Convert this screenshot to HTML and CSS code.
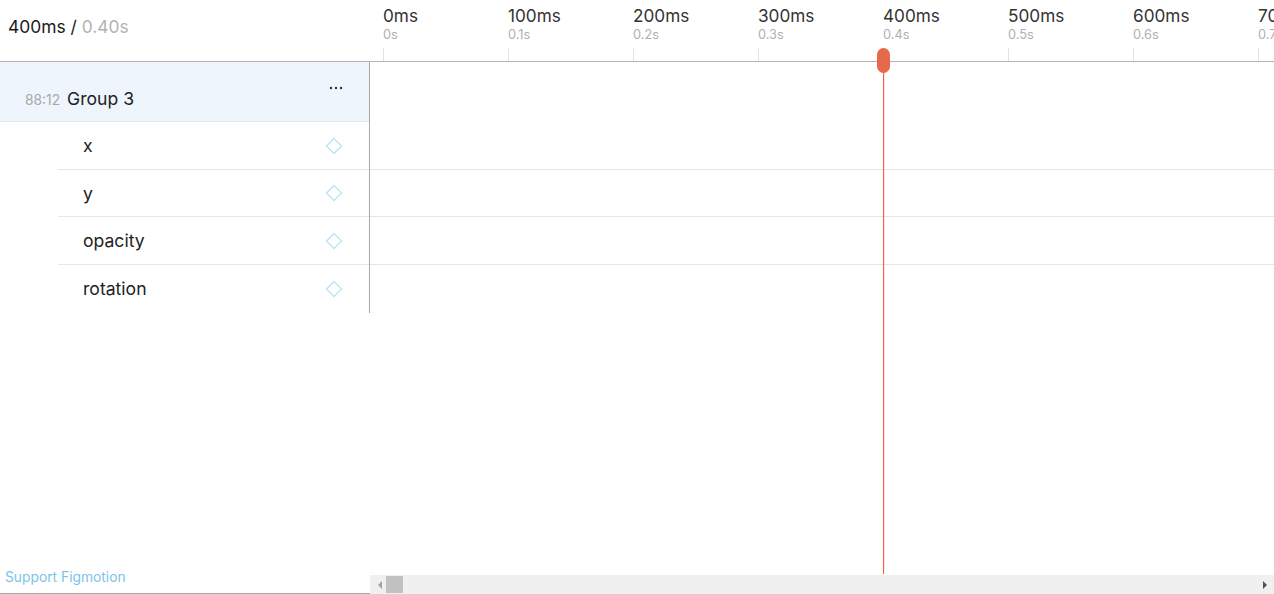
FILE: index.html
```html
<!DOCTYPE html>
<html lang="en">

<head>
    <meta charset="UTF-8">
    <meta name="viewport" content="width=device-width, initial-scale=1.0">
    <title>Figmotion Timeline</title>
    <link rel="stylesheet" href="styles.css">
</head>

<body>
    <div class="app">
        <div class="top">
            <div class="time-readout">400ms <span class="slash">/</span> <span class="secs">0.40s</span></div>
            <div class="ruler">
                <div class="tick"><span class="ms">0ms</span><span class="s">0s</span><i class="mark"></i></div>
                <div class="tick"><span class="ms">100ms</span><span class="s">0.1s</span><i class="mark"></i></div>
                <div class="tick"><span class="ms">200ms</span><span class="s">0.2s</span><i class="mark"></i></div>
                <div class="tick"><span class="ms">300ms</span><span class="s">0.3s</span><i class="mark"></i></div>
                <div class="tick"><span class="ms">400ms</span><span class="s">0.4s</span><i class="mark"></i></div>
                <div class="tick"><span class="ms">500ms</span><span class="s">0.5s</span><i class="mark"></i></div>
                <div class="tick"><span class="ms">600ms</span><span class="s">0.6s</span><i class="mark"></i></div>
                <div class="tick"><span class="ms">700ms</span><span class="s">0.7s</span><i class="mark"></i></div>
            </div>
        </div>

        <div class="body">
            <div class="layers">
                <div class="group-row">
                    <span class="layer-id">88:12</span>
                    <span class="layer-name">Group 3</span>
                    <svg class="more" viewBox="0 0 14 4"><circle cx="2" cy="2" r="1.2" /><circle cx="7" cy="2" r="1.2" /><circle cx="12" cy="2" r="1.2" /></svg>
                </div>
                <div class="prop-row"><span class="prop-name">x</span><svg class="key" viewBox="0 0 18 18"><path d="M9 1.5 16.5 9 9 16.5 1.5 9Z" /></svg></div>
                <div class="prop-row"><span class="prop-name">y</span><svg class="key" viewBox="0 0 18 18"><path d="M9 1.5 16.5 9 9 16.5 1.5 9Z" /></svg></div>
                <div class="prop-row"><span class="prop-name">opacity</span><svg class="key" viewBox="0 0 18 18"><path d="M9 1.5 16.5 9 9 16.5 1.5 9Z" /></svg></div>
                <div class="prop-row last"><span class="prop-name">rotation</span><svg class="key" viewBox="0 0 18 18"><path d="M9 1.5 16.5 9 9 16.5 1.5 9Z" /></svg></div>
            </div>
            <div class="tracks">
                <div class="track group-track"></div>
                <div class="track"></div>
                <div class="track"></div>
                <div class="track"></div>
                <div class="track last"></div>
            </div>
        </div>

        <div class="spacer"></div>

        <div class="footer">
            <div class="support"><a href="#">Support Figmotion</a></div>
            <div class="scrollbar">
                <span class="arrow left"></span>
                <span class="thumb"></span>
                <span class="arrow right"></span>
            </div>
        </div>

        <!-- playhead sits over the timeline at 400ms -->
        <div class="playhead">
            <div class="handle"></div>
        </div>
    </div>
</body>

</html>
```

FILE: styles.css
```css
body {
    margin: 0;
    font-family: Inter, "Noto Sans", sans-serif;
    color: #222;
    background-color: #ffffff;
}

.app {
    position: relative;
    width: 1274px;
    height: 594px;
    display: flex;
    flex-direction: column;
    overflow: hidden;
}

.top {
    display: flex;
    height: 61px;
    border-bottom: 1px solid #b4b4b4;
    flex-shrink: 0;
}

.time-readout {
    width: 370px;
    box-sizing: border-box;
    padding-left: 8px;
    font-size: 17.4px;
    line-height: 20px;
    padding-top: 17px;
    color: #1a1a1a;
}

.time-readout .secs {
    color: #b3b3b3;
}

.ruler {
    flex: 1;
    display: flex;
    padding-left: 13px;
    overflow: hidden;
}

.tick {
    width: 125px;
    flex-shrink: 0;
    display: flex;
    flex-direction: column;
}

.tick .ms {
    font-size: 17.2px;
    line-height: 20px;
    padding-top: 6px;
    color: #333;
    white-space: nowrap;
}

.tick .s {
    font-size: 12.8px;
    line-height: 16px;
    margin-top: 1px;
    color: #b0b0b0;
    white-space: nowrap;
}

.tick .mark {
    margin-top: auto;
    height: 13px;
    border-left: 1px solid #e2e2e2;
}

.body {
    display: flex;
    flex-shrink: 0;
}

.layers {
    width: 369px;
    border-right: 1px solid #a8a8a8;
}

.group-row {
    height: 60px;
    background-color: #eef5fc;
    border-bottom: 1px solid #e4e8ec;
    display: flex;
    align-items: flex-end;
    padding: 0 0 12px 25px;
    box-sizing: border-box;
    position: relative;
}

.layer-id {
    font-size: 13.8px;
    color: #a8a8a8;
    margin-right: 7px;
    line-height: 18px;
}

.layer-name {
    font-size: 17.6px;
    line-height: 20px;
}

.more {
    position: absolute;
    right: 26px;
    top: 24px;
    width: 14px;
    height: 4px;
    fill: #333;
}

.prop-row {
    height: 47px;
    margin-left: 58px;
    padding: 0 26px 0 25px;
    border-bottom: 1px solid #e6e6e6;
    display: flex;
    align-items: center;
    justify-content: space-between;
}

.prop-row:nth-child(3) {
    height: 46px;
}

.prop-row.last,
.track.last {
    border-bottom-color: transparent;
}

.prop-name {
    font-size: 17.6px;
}

.key {
    width: 18px;
    height: 18px;
}

.key path {
    fill: none;
    stroke: #bfe3f4;
    stroke-width: 1.3;
}

.tracks {
    flex: 1;
}

.track {
    height: 47px;
    border-bottom: 1px solid #e6e6e6;
}

.track:nth-child(3) {
    height: 46px;
}

.track.group-track {
    height: 60px;
    border-bottom: none;
}

.spacer {
    flex: 1;
}

.footer {
    display: flex;
    height: 26px;
    flex-shrink: 0;
}

.support {
    width: 370px;
    border-bottom: 1px solid #a8a8a8;
    box-sizing: border-box;
    padding-left: 5px;
    font-size: 13.8px;
    line-height: 18px;
}

.support a {
    color: #7cc3ea;
    text-decoration: none;
}

.scrollbar {
    flex: 1;
    align-self: flex-end;
    height: 19px;
    background-color: #f0f0f0;
    display: flex;
    align-items: center;
}

.thumb {
    width: 17px;
    height: 17px;
    background-color: #c1c1c1;
    margin-left: 4px;
}

.arrow {
    width: 0;
    height: 0;
    border-top: 4px solid transparent;
    border-bottom: 4px solid transparent;
}

.arrow.left {
    border-right: 4px solid #a3a3a3;
    margin-left: 8px;
}

.arrow.right {
    border-left: 4px solid #505050;
    margin-left: auto;
    margin-right: 7px;
}

.playhead {
    position: absolute;
    left: 883px;
    top: 48px;
    width: 1px;
    height: 526px;
    background-color: #f0603a;
    box-shadow: 0.4px 0 0 rgba(240, 96, 58, 0.35);
}

.handle {
    position: absolute;
    left: -6px;
    top: 0;
    width: 13px;
    height: 25px;
    border-radius: 7px;
    background-color: #e56a4b;
}
```
